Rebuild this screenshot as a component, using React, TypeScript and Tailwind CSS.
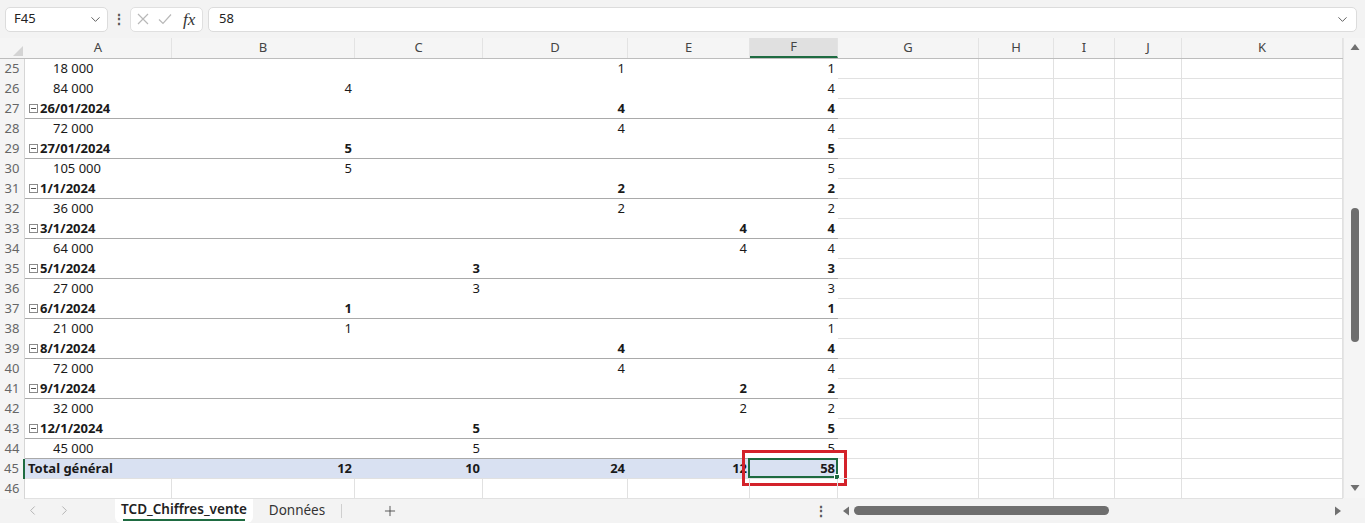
import React from 'react';
import { ChevronDown, ChevronLeft, ChevronRight, Plus } from 'lucide-react';

type Col = { n: string; w: string; pivot: boolean };
const cols: Col[] = [
  { n: 'A', w: 'w-[147px]', pivot: true },
  { n: 'B', w: 'w-[183px]', pivot: true },
  { n: 'C', w: 'w-[128px]', pivot: true },
  { n: 'D', w: 'w-[145px]', pivot: true },
  { n: 'E', w: 'w-[122px]', pivot: true },
  { n: 'F', w: 'w-[88px]', pivot: true },
  { n: 'G', w: 'w-[141px]', pivot: false },
  { n: 'H', w: 'w-[75px]', pivot: false },
  { n: 'I', w: 'w-[61px]', pivot: false },
  { n: 'J', w: 'w-[67px]', pivot: false },
  { n: 'K', w: 'w-[161px]', pivot: false },
];

type Row = {
  num: number;
  kind: 'child' | 'group' | 'total' | 'empty';
  label?: string;
  v?: Record<string, string>;
  lineBelow?: boolean;
};

const rows: Row[] = [
  { num: 25, kind: 'child', label: '18 000', v: { D: '1', F: '1' } },
  { num: 26, kind: 'child', label: '84 000', v: { B: '4', F: '4' } },
  { num: 27, kind: 'group', label: '26/01/2024', v: { D: '4', F: '4' } },
  { num: 28, kind: 'child', label: '72 000', v: { D: '4', F: '4' } },
  { num: 29, kind: 'group', label: '27/01/2024', v: { B: '5', F: '5' } },
  { num: 30, kind: 'child', label: '105 000', v: { B: '5', F: '5' } },
  { num: 31, kind: 'group', label: '1/1/2024', v: { D: '2', F: '2' } },
  { num: 32, kind: 'child', label: '36 000', v: { D: '2', F: '2' } },
  { num: 33, kind: 'group', label: '3/1/2024', v: { E: '4', F: '4' } },
  { num: 34, kind: 'child', label: '64 000', v: { E: '4', F: '4' } },
  { num: 35, kind: 'group', label: '5/1/2024', v: { C: '3', F: '3' } },
  { num: 36, kind: 'child', label: '27 000', v: { C: '3', F: '3' } },
  { num: 37, kind: 'group', label: '6/1/2024', v: { B: '1', F: '1' } },
  { num: 38, kind: 'child', label: '21 000', v: { B: '1', F: '1' } },
  { num: 39, kind: 'group', label: '8/1/2024', v: { D: '4', F: '4' } },
  { num: 40, kind: 'child', label: '72 000', v: { D: '4', F: '4' } },
  { num: 41, kind: 'group', label: '9/1/2024', v: { E: '2', F: '2' } },
  { num: 42, kind: 'child', label: '32 000', v: { E: '2', F: '2' } },
  { num: 43, kind: 'group', label: '12/1/2024', v: { C: '5', F: '5' } },
  { num: 44, kind: 'child', label: '45 000', v: { C: '5', F: '5' }, lineBelow: true },
  { num: 45, kind: 'total', label: 'Total général', v: { B: '12', C: '10', D: '24', E: '12', F: '58' } },
  { num: 46, kind: 'empty' },
];

function MinusBox() {
  return (
    <span className="inline-flex items-center justify-center w-[9px] h-[9px] border border-[#8a8a8a] mr-[2px] bg-white">
      <span className="block w-[5px] h-[1px] bg-[#555]" />
    </span>
  );
}

function Cell({ col, row }: { col: Col; row: Row }) {
  const isA = col.n === 'A';
  const val = row.v?.[col.n];
  let cls = `${col.w} h-[20px] shrink-0 flex items-center relative box-border border-b `;
  if (row.kind === 'empty' || !col.pivot) {
    cls += 'border-r border-[#e1e1e1] ';
  } else if (row.kind === 'group' || row.lineBelow) {
    cls += 'border-[#a9a9a9] ';
  } else if (row.kind === 'total') {
    cls += 'border-[#e1e1e1] bg-[#d9e1f2] font-bold ';
  } else {
    cls += 'border-transparent ';
  }
  if (row.kind === 'group') cls += 'font-bold ';

  let content: React.ReactNode = null;
  if (isA && row.label) {
    if (row.kind === 'child') content = <span className="pl-[28px]">{row.label}</span>;
    else if (row.kind === 'group')
      content = (
        <span className="pl-[4px] flex items-center">
          <MinusBox />
          {row.label}
        </span>
      );
    else content = <span className="pl-[3px]">{row.label}</span>;
  } else if (val) {
    content = <span className="ml-auto pr-[3px]">{val}</span>;
  }

  const selected = row.kind === 'total' && col.n === 'F';
  return (
    <div className={cls}>
      {content}
      {selected && (
        <>
          <div className="absolute -left-[2px] -top-[1px] right-0 bottom-0 border-2 border-[#1e6b41] pointer-events-none" />
          <div className="absolute -right-[2px] -bottom-[2px] w-[6px] h-[6px] bg-[#1e6b41] border border-white" />
          <div className="absolute -left-[8px] -top-[9px] w-[105px] h-[36px] border-[3px] border-[#d3222a]" />
        </>
      )}
    </div>
  );
}

export default function App() {
  return (
    <div className="w-[1365px] h-[523px] overflow-hidden bg-[#f3f3f3] text-[13px] text-[#1a1a1a] font-['Noto_Sans',sans-serif] flex flex-col">
      {/* Formula bar */}
      <div className="h-[38px] flex items-center pl-[5px] pr-[8px] shrink-0">
        <div className="w-[103px] h-[25px] bg-white border border-[#dcdcdc] rounded-[5px] flex items-center pl-[8px] pr-[4px]">
          <span className="text-[#222]">F45</span>
          <ChevronDown className="ml-auto text-[#555]" size={15} strokeWidth={1.5} />
        </div>
        <div className="w-[22px] flex justify-center text-[#555] font-bold text-[14px] leading-none">⋮</div>
        <div className="w-[73px] h-[25px] bg-white border border-[#e0e0e0] rounded-[5px] flex items-center pl-[6px] gap-[9px]">
          <svg width="12" height="12" viewBox="0 0 12 12">
            <path d="M1 1 L11 11 M11 1 L1 11" stroke="#b8b8b8" strokeWidth="1.2" fill="none" />
          </svg>
          <svg width="14" height="12" viewBox="0 0 14 12">
            <path d="M1 6.5 L5 10.5 L13 1.5" stroke="#b8b8b8" strokeWidth="1.2" fill="none" />
          </svg>
          <span className="font-['Liberation_Serif',serif] italic text-[17px] text-[#333] leading-none ml-[2px]">fx</span>
        </div>
        <div className="ml-[5px] flex-1 h-[25px] bg-white border border-[#dcdcdc] rounded-[5px] flex items-center pl-[10px] pr-[6px]">
          <span className="text-[#222]">58</span>
          <ChevronDown className="ml-auto text-[#555]" size={15} strokeWidth={1.5} />
        </div>
      </div>

      {/* Grid area */}
      <div className="flex h-[460px] shrink-0">
        <div className="w-[1343px] flex flex-col bg-white">
          {/* header row */}
          <div className="flex h-[20px] bg-[#f5f5f5] border-b border-[#bdbdbd] box-content">
            <div className="w-[25px] shrink-0 relative">
              <svg className="absolute right-[2px] bottom-[2px]" width="10" height="10" viewBox="0 0 10 10">
                <path d="M10 0 L10 10 L0 10 Z" fill="#d4d4d4" />
              </svg>
            </div>
            {cols.map((c) => (
              <div
                key={c.n}
                className={`${c.w} shrink-0 flex items-center justify-center text-[#444] border-r border-[#e3e3e3] ${
                  c.n === 'F' ? 'bg-[#e0e0e0] border-b-2 border-b-[#1e6b41] text-[#2b5c3f]' : ''
                }`}
              >
                {c.n}
              </div>
            ))}
          </div>
          {rows.map((r) => (
            <div key={r.num} className="flex h-[20px]">
              <div
                className={`w-[25px] shrink-0 flex items-center justify-center text-[#666] bg-[#f5f5f5] box-border ${
                  r.num === 45 ? 'border-r-2 border-[#1e6b41] text-[#3d6b50] bg-[#e6e6e6]' : 'border-r border-[#d6d6d6]'
                }`}
              >
                {r.num}
              </div>
              {cols.map((c) => (
                <Cell key={c.n} col={c} row={r} />
              ))}
            </div>
          ))}
        </div>
        {/* vertical scrollbar */}
        <div className="w-[22px] bg-[#f5f5f5] border-l border-[#e6e6e6] flex flex-col items-center pt-[5px] pb-[6px]">
          <svg width="10" height="8" viewBox="0 0 10 8">
            <path d="M5 1 L9.5 7 L0.5 7 Z" fill="#707070" />
          </svg>
          <div className="mt-[157px] w-[8px] h-[134px] rounded-full bg-[#6e6e6e]" />
          <div className="mt-auto">
            <svg width="10" height="8" viewBox="0 0 10 8">
              <path d="M0.5 1 L9.5 1 L5 7 Z" fill="#707070" />
            </svg>
          </div>
        </div>
      </div>

      {/* Tab bar */}
      <div className="h-[25px] flex items-center shrink-0">
        <div className="w-[115px] flex items-center pl-[25px] gap-[17px] text-[#b0b0b0]">
          <ChevronLeft size={15} strokeWidth={1.5} />
          <ChevronRight size={15} strokeWidth={1.5} />
        </div>
        <div className="h-[25px] w-[138px] bg-white rounded-b-[6px] flex flex-col items-center justify-center">
          <span className="font-semibold text-[#222] text-[13.5px] leading-[18px]">TCD_Chiffres_vente</span>
          <span className="block w-[122px] h-[2px] bg-[#1e6b41] mt-[1px]" />
        </div>
        <div className="w-[88px] flex justify-center text-[#333] text-[13.5px]">Données</div>
        <div className="w-[1px] h-[14px] bg-[#cfcfcf]" />
        <div className="w-[96px] flex justify-center text-[#444]">
          <Plus size={16} strokeWidth={1.3} />
        </div>
        <div className="w-[402px] flex justify-end pr-[12px] text-[#555] font-bold text-[14px]">⋮</div>
        <div className="flex-1 flex items-center pl-[2px] pr-[23px]">
          <svg width="8" height="10" viewBox="0 0 8 10">
            <path d="M7 0.5 L7 9.5 L1 5 Z" fill="#707070" />
          </svg>
          <div className="ml-[4px] w-[255px] h-[9px] rounded-full bg-[#6e6e6e]" />
          <div className="ml-auto">
            <svg width="8" height="10" viewBox="0 0 8 10">
              <path d="M1 0.5 L1 9.5 L7 5 Z" fill="#707070" />
            </svg>
          </div>
        </div>
      </div>
    </div>
  );
}
